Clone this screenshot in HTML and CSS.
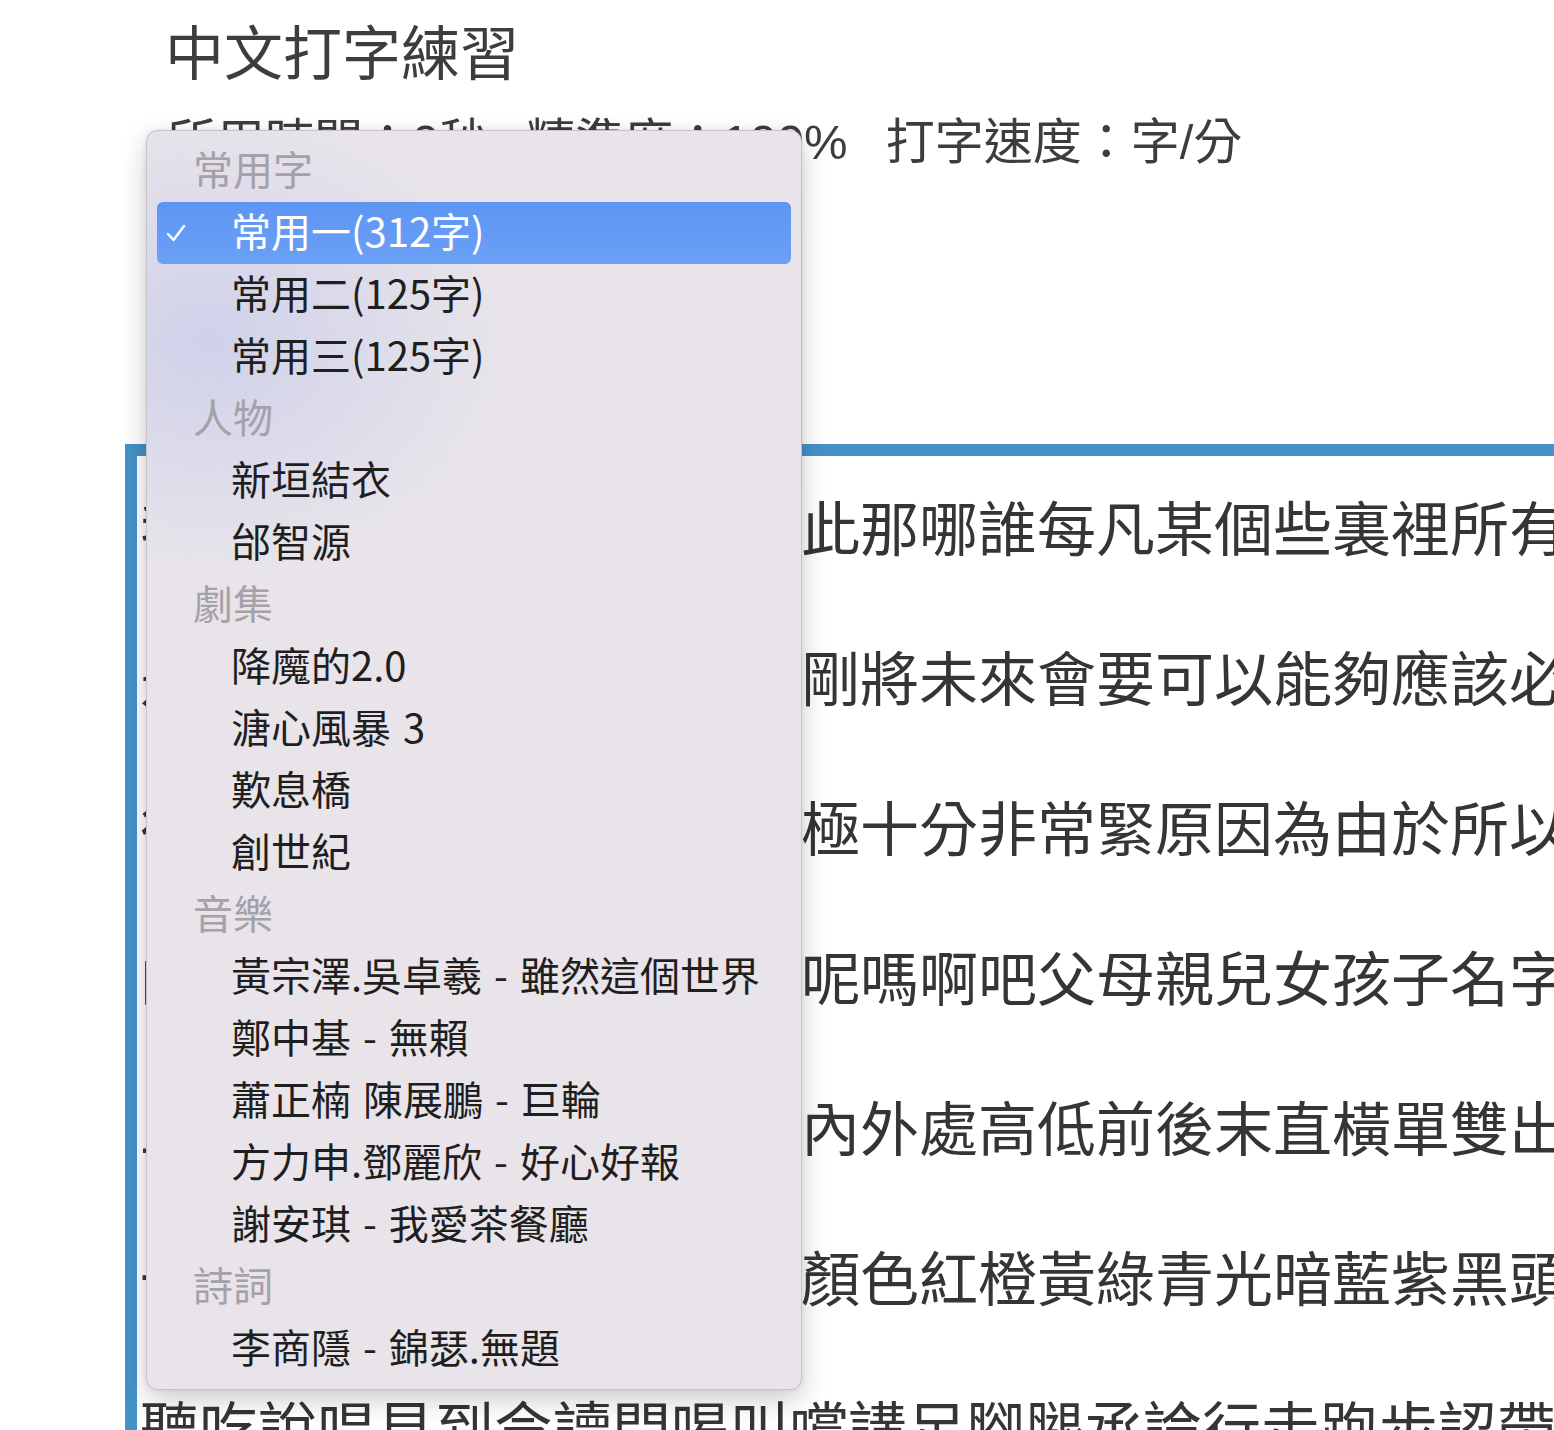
FILE: index.html
```html
<!DOCTYPE html>
<html lang="zh-Hant">
<head>
  <meta charset="UTF-8">
  <meta name="viewport" content="width=device-width, initial-scale=1.0">
  <title>中文打字練習</title>
  <link rel="stylesheet" href="styles.css">
</head>
<body>
  <div class="page">
    <h1 class="title">中文打字練習</h1>

    <p class="stats">
      <span>所用時間：<b>0</b>秒</span>
      <span>精準度：<b>100</b>%</span>
      <span>打字速度：<b></b>字/分</span>
    </p>

    <div class="controls">
      <select class="lesson-select">
        <option selected>常用一(312字)</option>
      </select>
    </div>

    <div class="board">
      <div class="board-row"><span class="lead">我你您他她它們咱自己這</span>此那哪誰每凡某個些裏裡所有</div>
      <div class="board-row"><span class="lead">是不沒了過在正曾經已才</span>剛將未來會要可以能夠應該必須</div>
      <div class="board-row"><span class="lead">很太最更還又再也都只就</span>極十分非常緊原因為由於所以</div>
      <div class="board-row"><span class="lead">的地得和與跟同及或但而</span>呢嗎啊吧父母親兒女孩子名字</div>
      <div class="board-row"><span class="lead">上下左右中東南西北裏面</span>內外處高低前後末直橫單雙出入</div>
      <div class="board-row"><span class="lead">一二三四五六七八九十百</span>顏色紅橙黃綠青光暗藍紫黑頭白</div>
      <div class="board-row">聽吃說唱見到令讀問喝叫嚐講足腳腿承論行走跑步認帶</div>
      <div class="board-row">春夏秋冬年月日時分秒早午晚今明昨天地山水火木金土</div>
    </div>
  </div>

  <!-- open dropdown of the lesson select -->
  <div class="menu">
    <div class="menu-group">常用字</div>
    <div class="menu-item selected">
      <svg class="check" viewBox="0 0 20 18"><path d="M2 10 L7.5 16 L18 2"/></svg>
      常用一(312字)
    </div>
    <div class="menu-item">常用二(125字)</div>
    <div class="menu-item">常用三(125字)</div>
    <div class="menu-group">人物</div>
    <div class="menu-item">新垣結衣</div>
    <div class="menu-item">邰智源</div>
    <div class="menu-group">劇集</div>
    <div class="menu-item">降魔的2.0</div>
    <div class="menu-item">溏心風暴 3</div>
    <div class="menu-item">歎息橋</div>
    <div class="menu-item">創世紀</div>
    <div class="menu-group">音樂</div>
    <div class="menu-item">黃宗澤.吳卓羲 - 雖然這個世界</div>
    <div class="menu-item">鄭中基 - 無賴</div>
    <div class="menu-item">蕭正楠 陳展鵬 - 巨輪</div>
    <div class="menu-item">方力申.鄧麗欣 - 好心好報</div>
    <div class="menu-item">謝安琪 - 我愛茶餐廳</div>
    <div class="menu-group">詩詞</div>
    <div class="menu-item">李商隱 - 錦瑟.無題</div>
  </div>
</body>
</html>
```

FILE: styles.css
```css
* {
  box-sizing: border-box;
  margin: 0;
  padding: 0;
}

html, body {
  height: 100%;
  overflow: hidden;
}

body {
  font-family: "Liberation Sans", "Noto Sans CJK TC", sans-serif;
  background-color: #fff;
  color: #3b3b3b;
  position: relative;
}

.page {
  padding: 20px 0 0 125px;
}

.title {
  font-family: "Liberation Serif", "Noto Sans CJK TC", serif;
  font-size: 59px;
  line-height: 70px;
  font-weight: 400;
  color: #3d3d3d;
  margin-left: 40px;
}

.stats {
  display: flex;
  gap: 38px;
  margin: 22px 0 0 42px;
  font-size: 49px;
  line-height: 60px;
  color: #3d3d3d;
}

.stats b {
  font-weight: 400;
}

.controls {
  margin: 27px 0 0 42px;
  height: 62px;
}

.lesson-select {
  font-size: 30px;
  height: 62px;
}

.board {
  margin-top: 183px;
  width: 1500px;
  border: 12px solid #4592c7;
  padding-left: 3px;
  font-size: 59px;
  line-height: 150px;
  color: #353535;
  white-space: nowrap;
  overflow: hidden;
}

.board-row .lead {
  margin-right: 12px;
}

/* dropdown */
.menu {
  position: absolute;
  left: 146px;
  top: 130px;
  width: 656px;
  height: 1260px;
  padding: 9px 10px 11px;
  border-radius: 12px;
  border: 1px solid rgba(0, 0, 0, 0.14);
  background:
    radial-gradient(ellipse 300px 230px at 60px 210px, rgba(206, 208, 234, 0.95), rgba(232, 228, 234, 0)),
    #e8e4ea;
  box-shadow: 0 10px 28px rgba(0, 0, 0, 0.2), 0 0 6px rgba(0, 0, 0, 0.08);
  font-family: "Noto Sans CJK TC", sans-serif;
  font-size: 40px;
  word-spacing: 3px;
}

.menu-group {
  height: 62px;
  line-height: 56px;
  padding-left: 36px;
  color: #a5a1a8;
}

.menu-item {
  position: relative;
  height: 62px;
  line-height: 56px;
  padding-left: 74px;
  color: #1f1f1f;
  border-radius: 6px;
  white-space: nowrap;
}

.menu-item.selected {
  background: linear-gradient(#5d95f3, #6ba0f6);
  color: #fff;
}

.check {
  position: absolute;
  left: 9px;
  top: 22px;
  width: 20px;
  height: 18px;
}

.check path {
  fill: none;
  stroke: #fff;
  stroke-width: 2.4;
  stroke-linecap: round;
  stroke-linejoin: round;
}
```
